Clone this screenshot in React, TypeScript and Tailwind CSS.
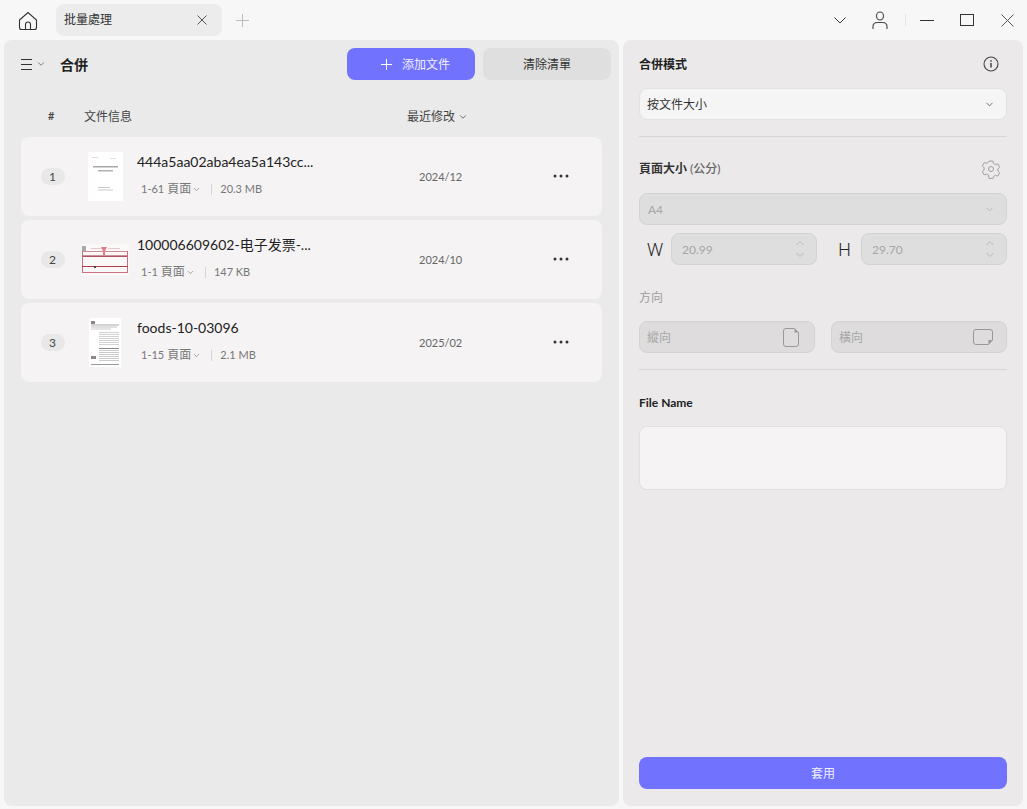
import React from 'react';
import { ChevronDown } from 'lucide-react';

const font = { fontFamily: 'Lato, "Noto Sans CJK SC", sans-serif' };

const files = [
  { id: 1, name: '444a5aa02aba4ea5a143cc...', range: '1-61', size: '20.3 MB', date: '2024/12', thumb: 'a' },
  { id: 2, name: '100006609602-电子发票-...', range: '1-1', size: '147 KB', date: '2024/10', thumb: 'b' },
  { id: 3, name: 'foods-10-03096', range: '1-15', size: '2.1 MB', date: '2025/02', thumb: 'c' },
];

const Cross: React.FC<{ size: number; color: string; className?: string }> = ({ size, color, className }) => (
  <svg className={className} width={size} height={size} viewBox={`0 0 ${size} ${size}`} stroke={color} strokeWidth="1" fill="none">
    <path d={`M.5 .5 ${size - 0.5} ${size - 0.5}M${size - 0.5} .5 .5 ${size - 0.5}`} />
  </svg>
);

const Thumb: React.FC<{ kind: string }> = ({ kind }) => {
  if (kind === 'a') {
    return (
      <svg width="35" height="49" viewBox="0 0 35 49">
        <rect width="35" height="49" fill="#fff" />
        <rect x="4" y="5" width="6" height="1" fill="#ddd" />
        <rect x="22" y="6" width="6" height="1" fill="#ddd" />
        <rect x="5" y="14" width="25" height="1.500" fill="#aaa" />
        <rect x="10" y="18" width="15" height="1.500" fill="#b0b0b0" />
        <rect x="10" y="35" width="12" height="1" fill="#ccc" />
        <rect x="10" y="37.500" width="15" height="1" fill="#ccc" />
      </svg>
    );
  }
  if (kind === 'b') {
    return (
      <svg width="48" height="32" viewBox="0 0 48 32">
        <rect width="48" height="32" fill="#fbf8f8" />
        <rect x="1" y="2" width="4" height="5" fill="#aaa" />
        <rect x="10" y="4" width="12" height="1" fill="#e8c8cc" />
        <rect x="27" y="4" width="12" height="1" fill="#e8c8cc" />
        <path d="M20 3h6l-2 4v4h-2V7z" fill="#de7d8a" />
        <rect x="1" y="7" width="46" height="1" fill="#d08a94" />
        <rect x="1" y="11.500" width="46" height="1.300" fill="#a02a3c" />
        <rect x="1" y="7" width="1" height="21" fill="#c8707e" />
        <rect x="46" y="7" width="1" height="21" fill="#c8707e" />
        <rect x="1" y="22" width="46" height="1" fill="#b03c4c" />
        <rect x="1" y="28" width="46" height="1" fill="#c8707e" />
        <rect x="13" y="22" width="2" height="2" fill="#444" />
      </svg>
    );
  }
  return (
    <svg width="32" height="49" viewBox="0 0 32 49">
      <rect width="32" height="49" fill="#fff" />
      <rect x="2" y="3" width="4" height="3" fill="#888" />
      <rect x="2" y="6.500" width="28" height="1" fill="#aaa" />
      <rect x="2" y="8.500" width="26" height="1" fill="#c0c0c0" />
      <rect x="2" y="10.500" width="20" height="1" fill="#ccc" />
      {[14, 16, 18, 20, 22, 24, 26].map((y) => (
        <rect key={y} x="10" y={y} width="20" height="1" fill="#d2d2d2" />
      ))}
      <rect x="10" y="30" width="20" height="1" fill="#888" />
      {[32, 34, 36, 38, 40, 42].map((y) => (
        <rect key={y} x="10" y={y} width="20" height="1" fill="#cacaca" />
      ))}
      <rect x="2" y="38" width="5" height="3" fill="#888" />
      <rect x="2" y="46" width="28" height="1" fill="#999" />
    </svg>
  );
};

const Stepper = () => (
  <svg width="10" height="20" viewBox="0 0 10 20" fill="none" stroke="#b9b9b9" strokeWidth="1">
    <path d="M1.500 6 5 2.500 8.500 6" />
    <path d="M1.500 14 5 17.500 8.500 14" />
  </svg>
);

export default function App() {
  return (
    <div className="w-[1027px] h-[809px] bg-[#f7f7f7] flex flex-col overflow-hidden text-[#222]" style={font}>
      {/* title bar */}
      <div className="h-[40px] flex items-center shrink-0">
        <div className="w-[56px] flex justify-center pt-[1px]">
          <svg width="20" height="20" viewBox="0 0 20 20" fill="none" stroke="#333" strokeWidth="1.100">
            <path d="M1.500 9 10 1.500 18.500 9v7.500a2 2 0 0 1-2 2h-13a2 2 0 0 1-2-2z" />
            <path d="M7.500 18.500v-5a2.500 2.500 0 0 1 5 0v5" />
          </svg>
        </div>
        <div className="w-[166px] h-[32px] mt-[-1px] rounded-lg bg-[#ececec] flex items-center justify-between pl-[8px] pr-[15px]">
          <span className="text-[12px] text-[#333]">批量處理</span>
          <Cross size={10} color="#555" />
        </div>
        <svg className="ml-[14px]" width="13" height="13" viewBox="0 0 13 13" stroke="#bdbdbd" strokeWidth="1">
          <path d="M6.500 0v13M0 6.500h13" />
        </svg>
        <div className="ml-auto flex items-center">
          <svg width="12" height="7" viewBox="0 0 12 7" fill="none" stroke="#333" strokeWidth="1">
            <path d="M.5 .5 6 6 11.500 .5" />
          </svg>
          <svg className="ml-[26px]" width="16" height="18" viewBox="0 0 16 18" fill="none" stroke="#444" strokeWidth="1.100">
            <ellipse cx="8" cy="5" rx="3.500" ry="4" />
            <path d="M1 18v-2.500C1 13 3 11.500 5.500 11.500h5C13 11.500 15 13 15 15.500V18" />
          </svg>
          <div className="w-px h-[12px] bg-[#e4e4e4] ml-[17px]" />
          <div className="w-[14px] h-px bg-[#333] ml-[14px]" />
          <div className="w-[14px] h-[12px] border border-[#333] ml-[26px]" />
          <Cross size={13} color="#555" className="ml-[27px] mr-[13px]" />
        </div>
      </div>

      <div className="flex-1 flex pl-[4px] pr-[4px] pb-[3px] gap-[4px] min-h-0">
        {/* left panel */}
        <div className="w-[615px] bg-[#eaeaea] rounded-lg pt-[8px] px-[17px]">
          <div className="flex items-center h-[32px]">
            <svg className="ml-[-1px]" width="13" height="13" viewBox="0 0 13 13" stroke="#333" strokeWidth="1">
              <path d="M1 1.500h11M1 6.500h11M1 11.500h11" />
            </svg>
            <ChevronDown size={10} color="#666" className="ml-[3px]" />
            <span className="ml-[14px] text-[14px] font-bold text-[#222]">合併</span>
            <button className="ml-auto w-[128px] h-[32px] rounded-lg bg-[#7173ff] text-white text-[12px] flex items-center pl-[34px] gap-[10px]">
              <svg width="11" height="11" viewBox="0 0 11 11" stroke="#fff" strokeWidth="1">
                <path d="M5.500 0v11M0 5.500h11" />
              </svg>
              <span className="text-[#f0f0ff] pt-[2px]">添加文件</span>
            </button>
            <button className="ml-[8px] mr-[-9px] w-[128px] h-[32px] pt-[2px] rounded-lg bg-[#dfdfdf] text-[12px] text-[#333]">清除清單</button>
          </div>
          <div className="flex items-center h-[25px] mt-[24px] text-[12px] text-[#444]">
            <span className="w-[63px] pl-[27px] text-[11px] font-semibold">#</span>
            <span className="w-[323px]">文件信息</span>
            <span>最近修改</span>
            <ChevronDown size={10} color="#555" className="ml-[3px]" />
          </div>
          <div className="mt-[8px] flex flex-col gap-[4px] w-[581px]">
            {files.map((f) => (
              <div key={f.id} className="h-[79px] bg-[#f5f3f4] rounded-lg flex items-center">
                <div className="w-[60px] flex justify-center">
                  <span className="w-[24px] h-[17px] ml-[3px] rounded-full bg-[#e8e8e8] text-[12px] text-[#444] flex items-center justify-center">{f.id}</span>
                </div>
                <div className="w-[48px] flex justify-center">
                  <Thumb kind={f.thumb} />
                </div>
                <div className="w-[282px] ml-[8px] flex flex-col pb-[4px]">
                  <span className="text-[14px] h-[22px] leading-[22px] text-[#222] whitespace-nowrap">{f.name}</span>
                  <div className="flex items-center mt-[7px] pl-[4px] text-[12px] text-[#777]">
                    <span className="text-[11px]">{f.range}</span>
                    <span className="ml-[3px]">頁面</span>
                    <ChevronDown size={9} color="#888" className="ml-[1px]" />
                    <div className="w-px h-[11px] bg-[#d5d5d5] ml-[10px] mr-[8px]" />
                    <span className="text-[11px]">{f.size}</span>
                  </div>
                </div>
                <span className="text-[11px] text-[#666] w-[134px] pt-[2px]">{f.date}</span>
                <svg width="16" height="4" viewBox="0 0 16 4" fill="#333" className="mb-[2px]">
                  <circle cx="2" cy="2" r="1.500" />
                  <circle cx="8" cy="2" r="1.500" />
                  <circle cx="14" cy="2" r="1.500" />
                </svg>
              </div>
            ))}
          </div>
        </div>

        {/* right panel */}
        <div className="flex-1 bg-[#ebe9ea] rounded-lg px-[16px] pb-[17px] flex flex-col">
          <div className="flex items-center justify-between h-[48px]">
            <span className="text-[12px] font-bold text-[#222] pt-[2px]">合併模式</span>
            <svg className="mr-[8px]" width="16" height="16" viewBox="0 0 16 16" fill="none" stroke="#444" strokeWidth="1.100">
              <circle cx="8" cy="8" r="7" />
              <path d="M8 7v4.500" strokeWidth="1.500" />
              <path d="M8 4.300v1.400" strokeWidth="1.500" />
            </svg>
          </div>
          <div className="h-[32px] rounded-lg bg-[#f6f5f5] border border-[#e2e2e2] flex items-center justify-between pl-[7px] pr-[11px] text-[12px] text-[#333]">
            <span className="pt-[2px]">按文件大小</span>
            <ChevronDown size={11} color="#666" />
          </div>
          <div className="h-px bg-[#d5d5d5] mt-[16px]" />
          <div className="flex items-center justify-between mt-[20px] h-[24px]">
            <span className="text-[12px] font-bold text-[#333]">頁面大小 <span className="text-[#666] font-medium">(公分)</span></span>
            <svg className="mr-[6px]" width="20" height="20" viewBox="0 0 24 24" fill="none" stroke="#999" strokeWidth="1.100">
              <path d="M9.700 2.500h4.600l.7 2.800 2.300 1.300 2.800-.8 2.300 4-2.100 2.200 0 2.600-.0 0 2.100 1.900-2.300 4-2.800-.8-2.300 1.300-.7 2.500H9.700L9 19.500l-2.300-1.300-2.800.8-2.300-4 2.100-1.900v-2.600L1.600 8.300l2.300-4 2.800.8L9 3.800z" />
              <circle cx="12" cy="12" r="3" />
            </svg>
          </div>
          <div className="h-[32px] mt-[12px] rounded-lg bg-[#dedede] border border-[#d3d3d3] flex items-center justify-between pl-[8px] pr-[11px] text-[12px] text-[#a6a6a6]">
            <span className="pt-[2px]">A4</span>
            <ChevronDown size={11} color="#b5b5b5" />
          </div>
          <div className="flex items-center mt-[8px] h-[32px]">
            <span className="w-[32px] font-['Noto_Sans'] text-[18px] font-light text-[#222] pl-[8px]">W</span>
            <div className="w-[146px] h-[32px] rounded-lg bg-[#dedede] border border-[#d3d3d3] flex items-center justify-between pl-[10px] pr-[11px] text-[12px] text-[#a6a6a6]">
              <span className="pt-[2px]">20.99</span>
              <Stepper />
            </div>
            <span className="w-[44px] font-['Noto_Sans'] text-[18px] font-light text-[#222] text-center pl-[11px]">H</span>
            <div className="w-[146px] h-[32px] rounded-lg bg-[#dedede] border border-[#d3d3d3] flex items-center justify-between pl-[10px] pr-[11px] text-[12px] text-[#a6a6a6]">
              <span className="pt-[2px]">29.70</span>
              <Stepper />
            </div>
          </div>
          <span className="mt-[25px] h-[16px] leading-[16px] text-[12px] text-[#a0a0a0]">方向</span>
          <div className="flex justify-between mt-[15px]">
            <div className="w-[176px] h-[32px] rounded-lg bg-[#dedcdd] border border-[#d3d3d3] flex items-center justify-between pl-[7px] pr-[15px] text-[12px] text-[#a6a6a6]">
              <span className="pt-[2px]">縱向</span>
              <svg width="16" height="19" viewBox="0 0 16 19" fill="none" stroke="#999" strokeWidth="1">
                <path d="M3 .500h8.500L15.500 4.500V16a2.500 2.500 0 0 1-2.500 2.500H3A2.500 2.500 0 0 1 .5 16V3A2.500 2.500 0 0 1 3 .500z" />
                <path d="M11.500.5 15.500 4.500h-4z" fill="#999" stroke="none" />
              </svg>
            </div>
            <div className="w-[176px] h-[32px] rounded-lg bg-[#dedcdd] border border-[#d3d3d3] flex items-center justify-between pl-[7px] pr-[13px] text-[12px] text-[#a6a6a6]">
              <span className="pt-[2px]">橫向</span>
              <svg width="20" height="16" viewBox="0 0 20 16" fill="none" stroke="#999" strokeWidth="1">
                <path d="M3 .500h14A2.500 2.500 0 0 1 19.500 3v8l-4 4.500H3A2.500 2.500 0 0 1 .5 13V3A2.500 2.500 0 0 1 3 .500z" />
                <path d="M19.500 11l-4 4.500V11z" fill="#999" stroke="none" />
              </svg>
            </div>
          </div>
          <div className="h-px bg-[#d5d5d5] mt-[16px]" />
          <span className="mt-[25px] h-[16px] leading-[16px] text-[12px] font-bold text-[#222]">File Name</span>
          <div className="h-[64px] mt-[15px] rounded-lg bg-[#f5f3f4] border border-[#e0e0e0]" />
          <button className="mt-auto h-[32px] pt-[2px] rounded-lg bg-[#7173ff] text-[12px] text-[#f0f0ff]">套用</button>
        </div>
      </div>
    </div>
  );
}
